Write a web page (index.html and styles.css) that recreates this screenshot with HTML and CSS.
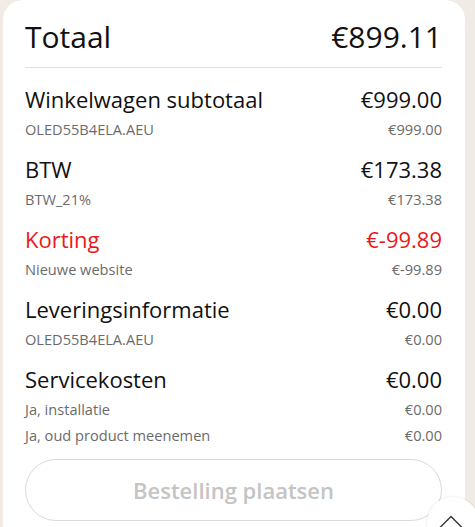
FILE: index.html
```html
<!DOCTYPE html>
<html lang="nl">
<head>
<meta charset="utf-8">
<title>Totaal</title>
<link rel="stylesheet" href="styles.css">
</head>
<body>
<div class="card">
  <div class="total">
    <span>Totaal</span>
    <span>€899.11</span>
  </div>
  <div class="section">
    <div class="row main"><span>Winkelwagen subtotaal</span><span>€999.00</span></div>
    <div class="row sub"><span>OLED55B4ELA.AEU</span><span>€999.00</span></div>
  </div>
  <div class="section">
    <div class="row main"><span>BTW</span><span>€173.38</span></div>
    <div class="row sub"><span>BTW_21%</span><span>€173.38</span></div>
  </div>
  <div class="section">
    <div class="row main discount"><span>Korting</span><span>€-99.89</span></div>
    <div class="row sub"><span>Nieuwe website</span><span>€-99.89</span></div>
  </div>
  <div class="section">
    <div class="row main"><span>Leveringsinformatie</span><span>€0.00</span></div>
    <div class="row sub"><span>OLED55B4ELA.AEU</span><span>€0.00</span></div>
  </div>
  <div class="section">
    <div class="row main"><span>Servicekosten</span><span>€0.00</span></div>
    <div class="row sub"><span>Ja, installatie</span><span>€0.00</span></div>
    <div class="row sub"><span>Ja, oud product meenemen</span><span>€0.00</span></div>
  </div>
  <button class="order" type="button">Bestelling plaatsen</button>
</div>
<button class="to-top" type="button" aria-label="Naar boven">
  <svg width="24" height="13" viewBox="0 0 24 13"><path d="M1 12.5 L12 1.5 L23 12.5" fill="none" stroke="#333" stroke-width="1.4"/></svg>
</button>
</body>
</html>
```
FILE: styles.css
```css
html, body {
  margin: 0;
  padding: 0;
  background: #f0ece5;
  overflow: hidden;
  height: 527px;
}
body {
  font-family: "Open Sans", "Noto Sans", sans-serif;
  color: #111;
}
.card {
  margin-left: 3px;
  width: 462px;
  box-sizing: border-box;
  background: #fff;
  border-radius: 20px 20px 0 0;
  padding: 17px 23px 20px 22px;
  min-height: 540px;
}
.total {
  display: flex;
  justify-content: space-between;
  align-items: center;
  font-size: 30px;
  line-height: 40px;
  padding-bottom: 10px;
  border-bottom: 1px solid #dedede;
  margin-bottom: 14px;
}
.amount {
  font-weight: 500;
}
.section + .section {
  margin-top: 10px;
}
.row {
  display: flex;
  justify-content: space-between;
  align-items: center;
}
.main {
  font-size: 22px;
  line-height: 34px;
}
.sub {
  font-size: 14.6px;
  line-height: 26px;
  color: #6b6b6b;
}
.discount {
  color: #ea1917;
}
.order {
  display: block;
  width: 100%;
  height: 62px;
  margin-top: 11px;
  border: 1px solid #d9d9d9;
  border-radius: 31px;
  background: #fff;
  color: #c4c4c4;
  font-family: inherit;
  font-size: 22px;
  font-weight: 600;
}
.to-top {
  position: fixed;
  left: 427px;
  top: 497px;
  width: 52px;
  height: 52px;
  border-radius: 50%;
  border: none;
  background: #fff;
  box-shadow: 0 0 3px rgba(0,0,0,0.12);
  display: flex;
  justify-content: center;
  align-items: flex-start;
  padding: 18px 0 0 0;
  margin: 0;
}
.to-top svg {
  margin-left: -4px;
}
```
